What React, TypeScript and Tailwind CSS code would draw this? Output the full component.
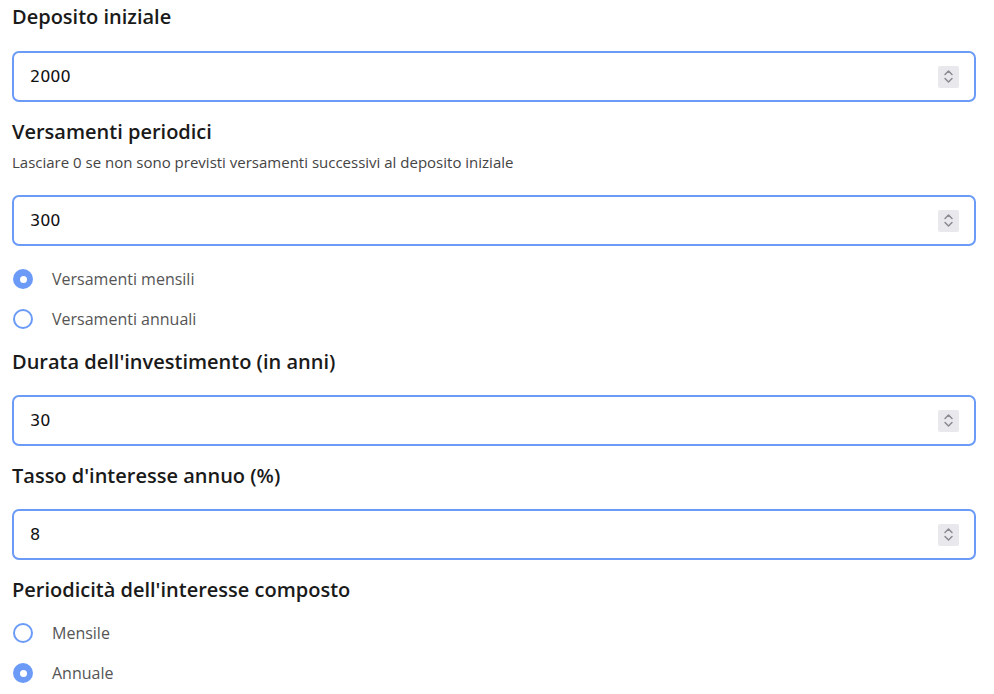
import { useState } from 'react';

const headingClass =
  "block h-[28px] text-[20px] leading-[28px] font-semibold text-[#1a1a1a] font-['Open_Sans',sans-serif]";

function Spinner() {
  return (
    <span className="absolute right-[17px] top-1/2 -translate-y-1/2 flex h-[22px] w-[21px] flex-col items-center justify-center rounded-[2px] bg-[#e9e9ed]">
      <svg width="11" height="17" viewBox="0 0 11 17" fill="none" stroke="#8a8a92" strokeWidth="1.5" strokeLinecap="round" strokeLinejoin="round">
        <path d="M2 6.5 L5.5 3 L9 6.5" />
        <path d="M2 10.5 L5.5 14 L9 10.5" />
      </svg>
    </span>
  );
}

function NumberField({ value, onChange }: { value: string; onChange: (v: string) => void }) {
  return (
    <div className="relative w-[964px]">
      <input
        type="text"
        value={value}
        onChange={e => onChange(e.target.value)}
        className="block h-[51px] w-full rounded-[7px] border-2 border-[#6b9bf7] bg-white pl-[16px] pr-12 text-[16px] text-[#111] font-['DejaVu_Sans',sans-serif] outline-none"
      />
      <Spinner />
    </div>
  );
}

function Radio({ checked, label, onSelect }: { checked: boolean; label: string; onSelect: () => void }) {
  return (
    <label className="flex h-10 cursor-pointer items-center" onClick={onSelect}>
      <span
        className={
          checked
            ? 'ml-[1px] flex h-[20px] w-[20px] items-center justify-center rounded-full bg-[#6b9bf7]'
            : 'ml-[1px] flex h-[20px] w-[20px] items-center justify-center rounded-full border-2 border-[#6b9bf7] bg-white'
        }
      >
        {checked && <span className="h-[7px] w-[7px] rounded-full bg-white" />}
      </span>
      <span className="ml-[19px] text-[16px] leading-6 text-[#555] font-['Open_Sans',sans-serif]">{label}</span>
    </label>
  );
}

export default function App() {
  const [deposit, setDeposit] = useState('2000');
  const [periodic, setPeriodic] = useState('300');
  const [years, setYears] = useState('30');
  const [rate, setRate] = useState('8');
  const [freq, setFreq] = useState<'monthly' | 'yearly'>('monthly');
  const [compound, setCompound] = useState<'monthly' | 'yearly'>('yearly');

  return (
    <div className="min-h-[694px] bg-white pl-3 pt-[3px]">
      <span className={headingClass}>Deposito iniziale</span>
      <div className="mt-5">
        <NumberField value={deposit} onChange={setDeposit} />
      </div>

      <span className={`${headingClass} mt-4`}>Versamenti periodici</span>
      <p className="mt-[6px] h-5 text-[15px] leading-5 text-[#444] font-['Open_Sans',sans-serif]">
        Lasciare 0 se non sono previsti versamenti successivi al deposito iniziale
      </p>
      <div className="mt-[23px]">
        <NumberField value={periodic} onChange={setPeriodic} />
      </div>
      <div className="mt-[13px]">
        <Radio checked={freq === 'monthly'} label="Versamenti mensili" onSelect={() => setFreq('monthly')} />
        <Radio checked={freq === 'yearly'} label="Versamenti annuali" onSelect={() => setFreq('yearly')} />
      </div>

      <span className={`${headingClass} mt-[9px]`}>Durata dell'investimento (in anni)</span>
      <div className="mt-[19px]">
        <NumberField value={years} onChange={setYears} />
      </div>

      <span className={`${headingClass} mt-4`}>Tasso d'interesse annuo (%)</span>
      <div className="mt-[19px]">
        <NumberField value={rate} onChange={setRate} />
      </div>

      <span className={`${headingClass} mt-4`}>Periodicità dell'interesse composto</span>
      <div className="mt-[9px]">
        <Radio checked={compound === 'monthly'} label="Mensile" onSelect={() => setCompound('monthly')} />
        <Radio checked={compound === 'yearly'} label="Annuale" onSelect={() => setCompound('yearly')} />
      </div>
    </div>
  );
}
